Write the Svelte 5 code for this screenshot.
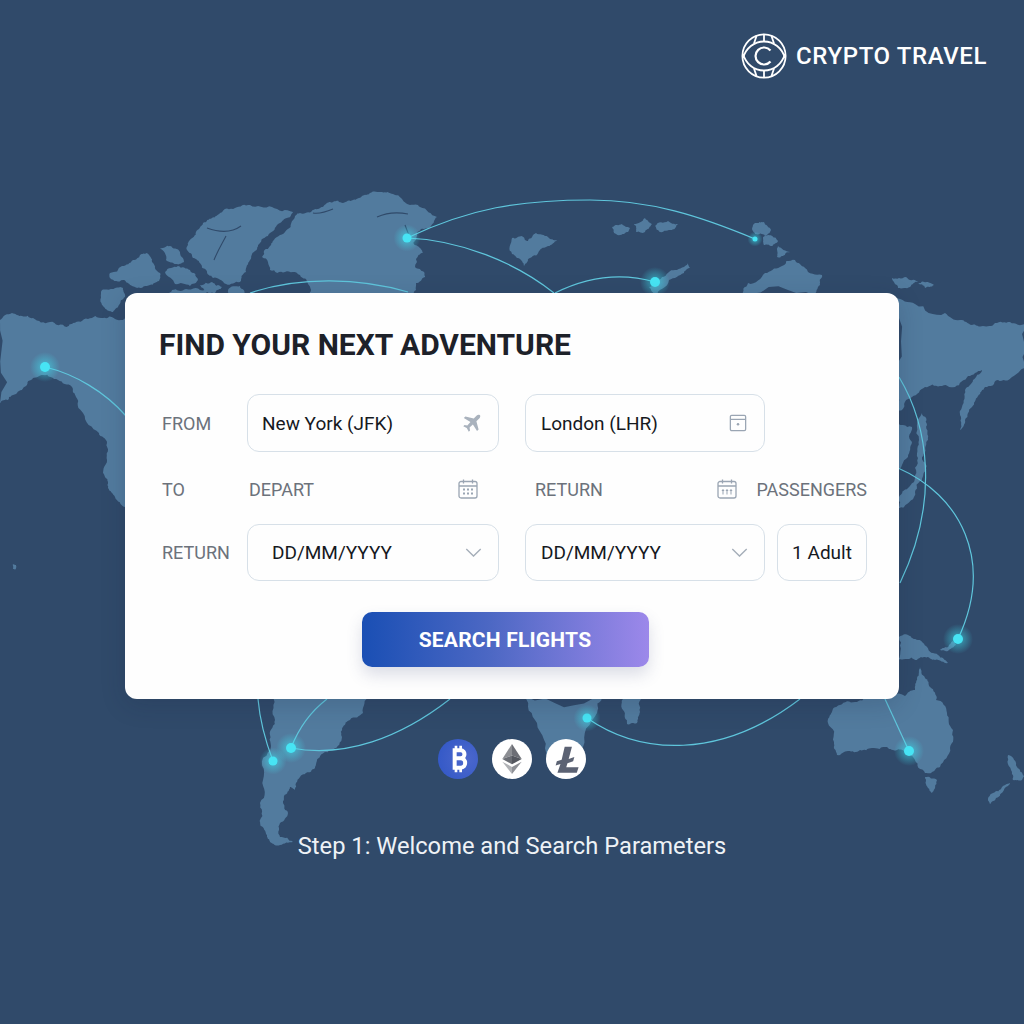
<script lang="ts">
	const land = [
		// greenland
		'262,257 270,246 277,237 285,232 293,220 300,213 311,212 320,208 326,204 333,202 343,203 353,200 362,196 370,193 382,192 393,194 401,198 410,205 420,207 437,217 431,226 421,229 417,233 413,243 419,247 423,253 416,259 415,267 424,272 425,277 416,283 413,296 310,296 308,284 300,275 285,272 270,270',
		// arctic islands
		'190,240 196,232 203,223 212,218 220,213 235,208 250,205 272,207 293,212 287,218 280,223 270,233 260,243 254,252 250,260 246,272 240,282 226,284 213,278 206,270 200,263 193,258 187,250',
		'110,273 122,266 133,260 140,255 147,253 152,262 160,273 159,281 150,285 137,288 130,285 123,280 110,278',
		'160,248 170,246 180,252 184,262 176,264 166,260',
		'165,272 178,266 190,270 198,280 190,286 175,284',
		'200,285 212,282 222,287 215,293 204,292',
		'102,290 112,289 123,288 125,297 119,305 113,312 107,310 102,305',
		'165,296 172,290 186,289 205,290 210,296',
		'228,290 240,286 246,296 230,296',
		// alaska and canada
		'0,320 12,313 22,316 33,318 50,322 67,327 73,323 88,319 103,318 115,319 130,316 130,512 125,507 115,497 108,488 105,477 107,460 107,443 99,433 83,413 76,397 72,387 58,380 43,375 33,378 26,386 17,393 8,400 0,403',
		// south america
		'273,696 370,696 363,713 350,720 343,727 342,737 333,750 322,754 317,760 315,768 306,773 300,777 295,790 290,787 284,796 283,803 288,813 280,823 280,837 293,842 280,845 270,842 267,837 261,826 260,820 260,803 263,780 268,752 270,735 275,720',
		// africa
		'525,696 537,723 547,757 557,777 568,772 583,747 597,713 603,696',
		'625,696 642,696 640,712 637,723 627,724 623,710',
		// siberia
		'895,298 915,304 945,313 960,320 972,325 983,326 995,323 1010,322 1026,323 1026,368 1012,377 998,380 985,387 978,396 972,407 965,420 960,430 960,415 962,407 965,390 973,380 982,370 968,376 955,387 940,386 925,387 912,397 902,410 895,415',
		'895,420 912,427 912,442 908,457 895,472',
		'922,413 927,425 928,440 925,452 922,458 926,468 922,480 915,492 904,507 899,508 899,497 908,488 915,478 918,458 919,440',
		// arctic russia
		'742,296 748,283 765,273 780,267 795,260 805,268 822,275 820,285 815,296',
		'655,296 649,287 662,277 675,270 688,263 690,268 684,273 669,280',
		'755,223 764,222 771,230 765,236 755,234 752,228',
		'763,237 772,236 778,241 772,246 764,245',
		'778,246 790,252 783,256 777,257',
		'512,238 522,236 528,241 536,233 548,237 557,240 548,246 540,250 530,258 524,266 518,258 512,254',
		'612,227 622,224 630,228 624,234 614,233',
		'634,224 645,218 652,224 645,232 636,232',
		'655,226 668,221 678,224 672,230 660,232',
		'892,278 906,277 918,281 910,287 898,288',
		'918,283 928,282 934,285 925,288',
		// papua and australia
		'899,637 908,635 918,640 927,647 938,655 948,663 935,660 925,657 917,660 905,659 898,660',
		'940,650 948,647 953,641 956,645 948,651',
		'828,723 832,712 840,705 855,702 868,696 880,696 905,696 915,690 917,678 920,667 925,678 930,687 936,700 947,713 953,730 950,748 940,767 932,772 925,773 915,760 907,753 897,750 887,747 872,748 860,750 848,751 837,755 834,742',
		'925,777 937,780 935,788 932,793 928,788',
		'1008,755 1017,767 1024,776 1022,780 1013,780 1012,772',
		'1010,783 1004,790 996,798 990,804 988,800 993,793 1002,787',
		// hawaii
		'13,564 16,565 16,569 13,569'
	];

	// dark inlets cut into the big land masses
	const fjords = [
		'M377 217 C 388 212 398 212 408 214',
		'M313 213 C 320 214 326 212 333 209',
		'M207 228 C 218 232 230 234 241 226',
		'M226 236 C 222 244 218 250 214 260',
		'M410 238 L 405 225'
	];

	const arcs = [
		'M407 238 C 470 208 520 200 590 200 C 650 200 700 216 755 239',
		'M407 238 C 460 240 515 262 554 293',
		'M555 293 C 585 278 620 272 655 282',
		'M250 293 C 300 276 360 278 408 292',
		'M45 367 C 75 374 105 392 126 416',
		'M899 377 C 928 425 940 500 900 583',
		'M898 468 C 960 495 995 560 958 639',
		'M587 718 C 640 755 720 760 800 699',
		'M885 699 L 909 751',
		'M258 699 C 260 722 265 740 273 761',
		'M327 699 C 310 712 298 730 291 748',
		'M291 748 C 345 758 400 738 450 699'
	];

	const nodes = [
		[407, 238, 4.5], [655, 282, 5], [45, 367, 5], [291, 748, 5], [273, 761, 4.5],
		[958, 639, 5], [909, 751, 5], [587, 718, 4.5], [755, 239, 2.5]
	];

	// midpoint displacement, so the hand-placed outlines get a coast-like edge
	function rough(points: string) {
		let pts = points.split(' ').map((p) => p.split(',').map(Number));
		for (let pass = 0; pass < 3; pass++) {
			const next: number[][] = [];
			pts.forEach(([x, y], i) => {
				const [nx, ny] = pts[(i + 1) % pts.length];
				const seed = Math.sin(x * 12.9898 + y * 78.233 + pass) * 43758.5453;
				const r = (seed - Math.floor(seed) - 0.5) * 0.34;
				next.push([x, y], [(x + nx) / 2 - (ny - y) * r, (y + ny) / 2 + (nx - x) * r]);
			});
			pts = next;
		}
		return pts.map(([x, y]) => `${x.toFixed(1)},${y.toFixed(1)}`).join(' ');
	}

	const coast = land.map(rough);
</script>

<div class="page">
	<svg class="map" viewBox="0 0 1024 1024" aria-hidden="true">
		<defs>
			<radialGradient id="glow">
				<stop offset="0" stop-color="#3fe6f5" stop-opacity="0.6" />
				<stop offset="1" stop-color="#3fe6f5" stop-opacity="0" />
			</radialGradient>
		</defs>
		{#each coast as points}
			<polygon {points} fill="#527b9e" />
		{/each}
		{#each fjords as d}
			<path {d} fill="none" stroke="#304a6a" stroke-width="1.1" />
		{/each}
		{#each arcs as d}
			<path {d} fill="none" stroke="#5fc6dc" stroke-width="1.2" />
		{/each}
		{#each nodes as [x, y, r]}
			<circle cx={x} cy={y} r={r * 3} fill="url(#glow)" />
			<circle cx={x} cy={y} {r} fill="#47e4f4" />
		{/each}
	</svg>

	<header>
		<svg class="logo" viewBox="0 0 46 46" fill="none" stroke="#fff" stroke-width="1.8" aria-hidden="true">
			<circle cx="23" cy="23" r="21.6" />
			<path d="M2 25 C 5 15 13 8.500 23 8.500 C 33 8.500 41 15 44 25" />
			<path d="M2 21 C 5 31 13 37.500 23 37.500 C 33 37.500 41 31 44 21" />
			<path d="M15.500 3 L13 10.500 M30.500 3 L33 10.500 M23 1.500 V8.500 M15.500 43 L13 35.500 M30.500 43 L33 35.500 M23 37.500 V44.500" />
			<path d="M29.500 17.500 A8.500 8.500 0 1 0 29.500 28.500" stroke-width="2.200" />
		</svg>
		<span class="brand">CRYPTO TRAVEL</span>
	</header>

	<main class="card">
		<h1>FIND YOUR NEXT ADVENTURE</h1>
		<div class="form">
			<span class="label">FROM</span>
			<div class="field one">
				<span>New York (JFK)</span>
				<svg class="plane" viewBox="0 0 24 24" aria-hidden="true">
					<path d="M21.600 2.600c-1-.9-2.600-.7-3.600.3l-3.400 3.500L5 3.900 3.200 5.700l7.600 4.700-3.600 3.800-3.200-.5L2.600 15l4 2.200L8.900 21.300l1.400-1.400-.5-3.200 3.800-3.600 4.700 7.600 1.800-1.800-2.500-9.600 3.500-3.400c1-1 1.200-2.700.5-3.600z" fill="#a9b2bd" />
				</svg>
			</div>
			<div class="field two">
				<span>London (LHR)</span>
				<svg class="icon" viewBox="0 0 20 20" fill="none" stroke="#9aa5b3" stroke-width="1.400" aria-hidden="true">
					<rect x="1.500" y="1.500" width="17" height="17" rx="1.500" />
					<path d="M1.500 6 H18.500" />
					<circle cx="10" cy="11.500" r="1.400" fill="#9aa5b3" stroke="none" />
				</svg>
			</div>

			<span class="label mid">TO</span>
			<div class="plain one mid">
				<span class="label">DEPART</span>
				<svg class="cal" viewBox="0 0 20 20" fill="none" stroke="#9aa5b3" stroke-width="1.300" aria-hidden="true">
					<rect x="1" y="2.500" width="18" height="16.500" rx="2" />
					<path d="M1 7 H19 M5.500 0.500 V4.500 M14.500 0.500 V4.500" />
					<path d="M5 10.500h2M9 10.500h2M13 10.500h2M5 14.500h2M9 14.500h2M13 14.500h2" stroke-width="1.800" />
				</svg>
			</div>
			<div class="plain wide mid">
				<span class="label">RETURN</span>
				<svg class="cal" viewBox="0 0 20 20" fill="none" stroke="#9aa5b3" stroke-width="1.300" aria-hidden="true">
					<rect x="1" y="2.500" width="18" height="16.500" rx="2" />
					<path d="M1 7 H19 M5.500 0.500 V4.500 M14.500 0.500 V4.500" />
					<path d="M6 10v5.500M10 10v5.500M14 10v5.500M4.800 11.500h2.400M8.800 11.500h2.400M12.800 11.500h2.400" stroke-width="1" />
				</svg>
				<span class="label">PASSENGERS</span>
			</div>

			<span class="label">RETURN</span>
			<div class="field one date">
				<span>DD/MM/YYYY</span>
				<svg class="chev" viewBox="0 0 18 10" fill="none" stroke="#a5aeb9" stroke-width="1.500" aria-hidden="true"><path d="M1 1 L9 9 L17 1" /></svg>
			</div>
			<div class="field two">
				<span>DD/MM/YYYY</span>
				<svg class="chev" viewBox="0 0 18 10" fill="none" stroke="#a5aeb9" stroke-width="1.500" aria-hidden="true"><path d="M1 1 L9 9 L17 1" /></svg>
			</div>
			<div class="field three"><span>1 Adult</span></div>
		</div>
		<button>SEARCH FLIGHTS</button>
	</main>

	<div class="coins">
		<div class="coin btc">
			<svg viewBox="0 0 24 24" fill="none" stroke="#fff" aria-hidden="true">
				<path d="M8 5.500 H14 C17.800 5.500 17.800 11.500 14 11.500 H9 M14 11.500 C18.500 11.500 18.500 18.500 14 18.500 H8 M9.500 5.500 V18.500" stroke-width="3" />
				<path d="M10.500 2 V5 M14 2 V5 M10.500 19 V22 M14 19 V22" stroke-width="2" />
			</svg>
		</div>
		<div class="coin">
			<svg class="eth" viewBox="0 0 24 34" aria-hidden="true">
				<polygon points="12,0 1,17 12,13" fill="#8c8e93" />
				<polygon points="12,0 23,17 12,13" fill="#6d6f76" />
				<polygon points="1,17 12,13 12,23" fill="#6a6d74" />
				<polygon points="23,17 12,13 12,23" fill="#54575f" />
				<polygon points="1,20 12,26 12,34" fill="#b0b2b6" />
				<polygon points="23,20 12,26 12,34" fill="#8e9096" />
			</svg>
		</div>
		<div class="coin">
			<svg viewBox="0 0 24 24" aria-hidden="true">
				<polygon points="10.500,1.500 16.500,1.500 13.800,11.500 18.500,10 17.500,13.500 12.800,15 11.800,18.500 22,18.500 20.500,23 4.500,23 7,15.800 3,17 4,13.500 8,12.200" fill="#5b6273" />
			</svg>
		</div>
	</div>

	<p class="caption">Step 1: Welcome and Search Parameters</p>
</div>

<style>
	:global(body) {
		margin: 0;
		background: #304a6a;
	}

	.page {
		position: relative;
		width: 1024px;
		height: 1024px;
		overflow: hidden;
		display: flex;
		flex-direction: column;
		align-items: center;
		background: #304a6a;
		font-family: Roboto, "Liberation Sans", sans-serif;
	}

	.map {
		position: absolute;
		inset: 0;
		width: 1024px;
		height: 1024px;
	}

	header {
		position: relative;
		align-self: stretch;
		display: flex;
		justify-content: flex-end;
		align-items: center;
		gap: 9px;
		height: 46px;
		padding: 33px 37px 0 0;
		margin-bottom: 214px;
	}

	.logo {
		width: 46px;
		height: 46px;
	}

	.brand {
		color: #fff;
		font-size: 24px;
		font-weight: 500;
		letter-spacing: 0.6px;
	}

	.card {
		position: relative;
		box-sizing: border-box;
		width: 774px;
		height: 406px;
		padding: 34px 32px 0 34px;
		background: #fefefe;
		border-radius: 12px;
		box-shadow: 0 6px 24px rgba(20, 35, 60, 0.18);
	}

	h1 {
		margin: 0 0 31px;
		color: #1d2129;
		font-size: 30px;
		line-height: 36px;
		font-weight: 700;
	}

	.form {
		display: grid;
		grid-template-columns: 85px 252px 26px 240px 12px 90px;
		grid-template-rows: 58px 72px 57px;
		align-items: center;
		padding-left: 3px;
	}

	.label {
		color: #6c727b;
		font-size: 18px;
	}

	.mid {
		margin-top: 2px;
	}

	.form > .label {
		grid-column: 1;
	}

	.one {
		grid-column: 2;
	}

	.two {
		grid-column: 4;
	}

	.three {
		grid-column: 6;
	}

	.wide {
		grid-column: 4 / 7;
	}

	.field {
		box-sizing: border-box;
		height: 100%;
		display: flex;
		align-items: center;
		justify-content: space-between;
		padding: 0 16px 0 14px;
		border: 1.500px solid #d7e0e8;
		border-radius: 12px;
		color: #16191e;
		font-size: 19px;
	}

	.date {
		padding-left: 24px;
	}

	.field.two {
		padding-left: 15px;
	}

	.field.three {
		justify-content: center;
		padding: 0;
	}

	.plain {
		display: flex;
		align-items: center;
		justify-content: space-between;
		padding-left: 2px;
	}

	.plain.one {
		padding-right: 21px;
	}

	.plain.wide {
		padding-left: 10px;
	}

	.plane {
		width: 21px;
		height: 21px;
	}

	.icon {
		width: 18px;
		height: 18px;
		margin-right: 1px;
	}

	.cal {
		width: 20px;
		height: 22px;
		margin-left: auto;
	}

	.wide .cal {
		margin-right: 19px;
	}

	.chev {
		width: 17px;
		height: 9px;
	}

	button {
		display: block;
		width: 287px;
		height: 55px;
		margin: 31px auto 0;
		padding: 0;
		border: none;
		border-radius: 10px;
		background: linear-gradient(90deg, #1a4fb4 0%, #4d68c4 45%, #9c88ea 100%);
		box-shadow: 0 8px 16px rgba(60, 70, 120, 0.18);
		color: #fff;
		font-family: inherit;
		font-size: 21px;
		font-weight: 700;
		letter-spacing: 0.2px;
		position: relative;
		left: -8px;
	}

	.coins {
		position: relative;
		display: flex;
		gap: 14px;
		margin-top: 40px;
	}

	.coin {
		width: 40px;
		height: 40px;
		border-radius: 50%;
		background: #fff;
		display: flex;
		align-items: center;
		justify-content: center;
	}

	.coin svg {
		width: 29px;
		height: 29px;
	}

	.coin .eth {
		width: 22px;
		height: 30px;
	}

	.btc {
		background: radial-gradient(circle at 70% 50%, #4d68cc, #2f56c6);
	}

	.btc svg {
		width: 32px;
		height: 32px;
	}

	.caption {
		position: relative;
		margin: 52px 0 0;
		color: #eef2f6;
		font-size: 23.700px;
		line-height: 30px;
	}
</style>
